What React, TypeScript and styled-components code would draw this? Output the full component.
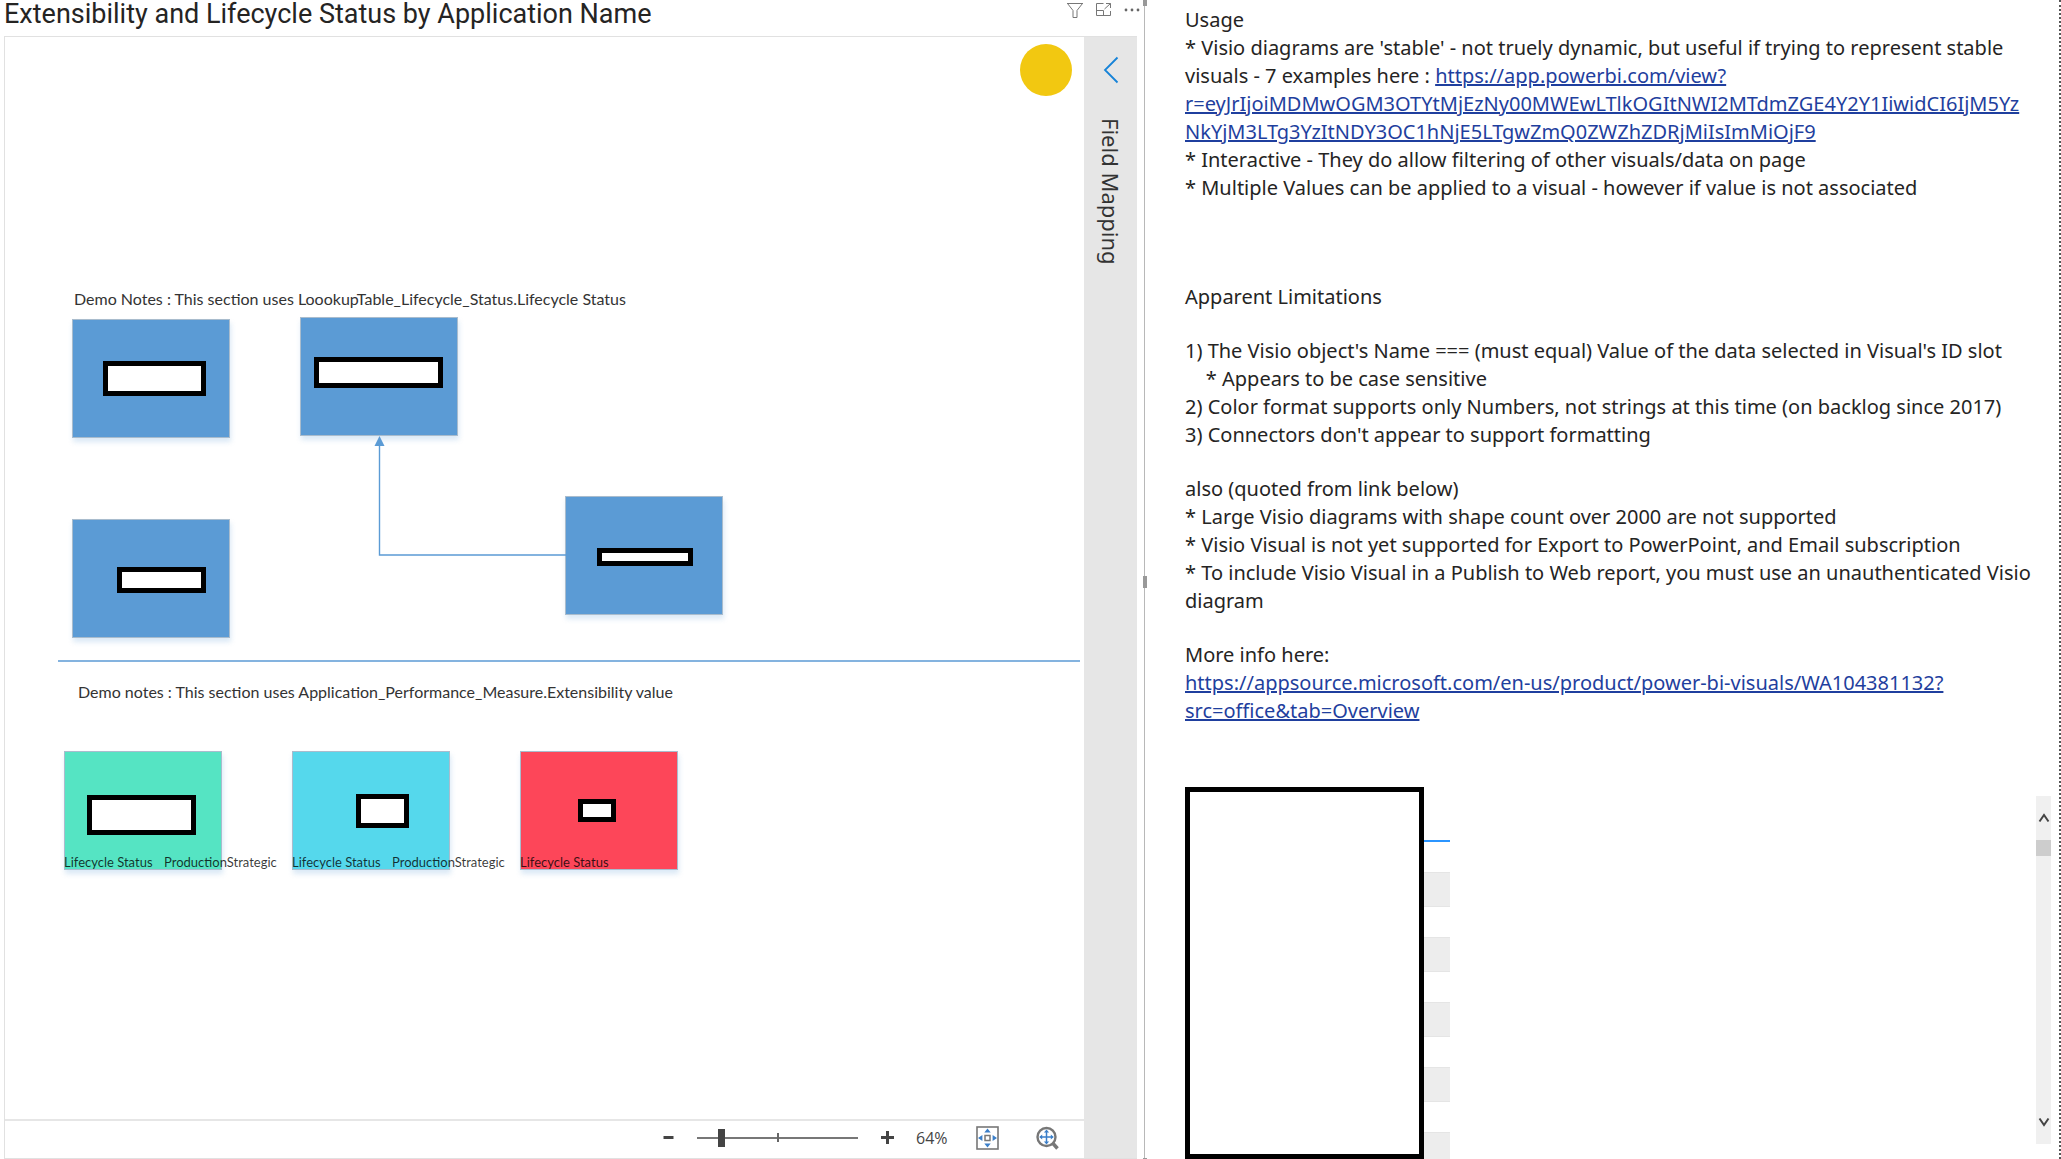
import React, { useState } from "react";
import styled, { createGlobalStyle } from "styled-components";

const GlobalStyle = createGlobalStyle`
  *, *::before, *::after { box-sizing: border-box; }
  html, body, #root { height: 100%; }
  body {
    margin: 0;
    background: #fff;
    color: #252423;
    font-family: "Open Sans", "Noto Sans", sans-serif;
    overflow: hidden;
  }
`;

const Page = styled.main`
  display: grid;
  grid-template-columns: 5fr 4fr;
  height: 100vh;
`;

/* ---------- left side: the diagram visual ---------- */

const VisualPane = styled.section`
  position: relative;
  display: flex;
  flex-direction: column;
  min-width: 0;
  padding: 0 7px 0 4px;
  border-right: 1px solid #b8b8b8;
`;

const ResizeHandle = styled.span<{ $top: string; $height: number }>`
  position: absolute;
  right: -3px;
  top: ${(p) => p.$top};
  width: 4px;
  height: ${(p) => p.$height}px;
  background: #999;
`;

const VisualHeader = styled.header`
  display: flex;
  justify-content: space-between;
  align-items: flex-start;
  height: 36px;
`;

const Title = styled.h1`
  margin: 0;
  font: 400 27px/28px Roboto, sans-serif;
  white-space: nowrap;
`;

const HeaderActions = styled.div`
  display: flex;
  gap: 12px;
  margin-right: -3px;
  padding-top: 2px;
`;

const IconButton = styled.button`
  display: grid;
  place-items: center;
  flex: none;
  padding: 0;
  border: 0;
  background: none;
  color: inherit;
  cursor: pointer;
`;

const Frame = styled.div`
  display: flex;
  flex: 1;
  min-height: 0;
  border: 1px solid #e1e1e1;
  border-right: 0;
`;

const DiagramColumn = styled.div`
  display: flex;
  flex: 1;
  flex-direction: column;
  min-width: 0;
`;

const Canvas = styled.div`
  position: relative;
  flex: 1;
  overflow: hidden;
  border-bottom: 2px solid #e6e6e6;
`;

const Marker = styled.span`
  position: absolute;
  top: 7px;
  right: 12px;
  width: 52px;
  height: 52px;
  border-radius: 50%;
  background: #f2c811;
`;

const Connector = styled.svg`
  position: absolute;
  left: 369px;
  top: 398px;
`;

const Divider = styled.hr`
  position: absolute;
  left: 53px;
  right: 4px;
  top: 623px;
  height: 2px;
  margin: 0;
  border: 0;
  background: #84b3df;
`;

type Box = { $x: number; $y: number; $w?: number; $h?: number };

const Note = styled.p<Box>`
  position: absolute;
  left: ${(p) => p.$x}px;
  top: ${(p) => p.$y}px;
  margin: 0;
  font: 400 16px/20px Lato, sans-serif;
  color: #333;
  white-space: nowrap;
`;

const Shape = styled.div<Box & { $fill: string }>`
  position: absolute;
  left: ${(p) => p.$x}px;
  top: ${(p) => p.$y}px;
  width: 158px;
  height: 119px;
  border: 1px solid #a9bccd;
  background: ${(p) => p.$fill};
  box-shadow: 1px 4px 5px rgba(91, 155, 213, 0.22);
`;

const Mask = styled.div<Box>`
  position: absolute;
  left: ${(p) => p.$x}px;
  top: ${(p) => p.$y}px;
  width: ${(p) => p.$w}px;
  height: ${(p) => p.$h}px;
  border: 5px solid #000;
  background: #fff;
`;

const ShapeData = styled.div<Box>`
  position: absolute;
  left: ${(p) => p.$x}px;
  top: ${(p) => p.$y}px;
  display: flex;
  font: 400 13px/16px Lato, sans-serif;
  color: rgba(0, 0, 0, 0.78);
  white-space: nowrap;
`;

const DataLabel = styled.span`
  width: 100px;
`;

const Toolbar = styled.div`
  display: flex;
  align-items: center;
  justify-content: flex-end;
  gap: 28px;
  height: 37px;
  padding: 0 25px 4px 0;
  color: #444;
`;

const ZoomControl = styled.div`
  display: flex;
  align-items: center;
  gap: 17px;
`;

const ZoomStep = styled(IconButton)`
  width: 24px;
  height: 24px;
`;

const ZoomRange = styled.input`
  appearance: none;
  width: 161px;
  height: 20px;
  margin: 0;
  background:
    linear-gradient(#666, #666) 50% 50% / 2px 9px no-repeat,
    linear-gradient(#777, #777) 0 50% / 100% 2px no-repeat;

  &::-webkit-slider-thumb {
    appearance: none;
    width: 7px;
    height: 18px;
    border-radius: 0;
    background: #444;
  }
`;

const ZoomValue = styled.output`
  width: 32px;
  font-size: 16px;
  line-height: 24px;
`;

const ViewActions = styled.div`
  display: flex;
  gap: 37px;
`;

const FieldPanel = styled.aside`
  display: flex;
  flex-direction: column;
  align-items: center;
  gap: 34px;
  width: 53px;
  padding-top: 19px;
  background: #e6e6e6;
`;

const FieldLabel = styled.h2`
  margin: 0;
  font: 400 22px/30px "Noto Sans", sans-serif;
  color: #333;
  writing-mode: vertical-rl;
`;

/* ---------- right side: notes and table ---------- */

const InfoPane = styled.section`
  display: flex;
  flex-direction: column;
  min-width: 0;
  min-height: 0;
  padding: 6px 7px 0 40px;
  border-right: 2px dotted #555;
`;

const Notes = styled.article`
  display: flex;
  flex-direction: column;
  gap: 26px;
  font-family: "Noto Sans", sans-serif;
  font-size: 20px;
  line-height: 28px;
`;

const NoteBlock = styled.p<{ $wide?: boolean }>`
  margin: 0 0 ${(p) => (p.$wide ? 55 : 0)}px;
  white-space: pre-wrap;
  overflow-wrap: anywhere;
`;

const Link = styled.a`
  color: #1f3f9e;
  text-decoration: underline;
`;

const TableArea = styled.div`
  position: relative;
  display: flex;
  justify-content: space-between;
  flex: 1;
  min-height: 0;
  margin-top: 62px;
  overflow: hidden;
`;

const DataTable = styled.table`
  width: 265px;
  height: max-content;
  margin-top: 7px;
  border-collapse: collapse;
`;

const HeadCell = styled.th`
  height: 47px;
  padding: 0;
  border-bottom: 2px solid #2b95ff;
`;

const Row = styled.tr`
  &:nth-child(even) td {
    background: #ededed;
    border-top: 1px solid #e5e5e5;
    border-bottom: 1px solid #e5e5e5;
  }
`;

const Cell = styled.td<{ $tall: boolean }>`
  height: ${(p) => (p.$tall ? 34 : 31)}px;
  padding: 0;
`;

const TableCover = styled.div`
  position: absolute;
  left: 0;
  top: 0;
  bottom: 0;
  width: 239px;
  border: 5px solid #000;
  background: #fff;
`;

const ScrollTrack = styled.div`
  display: flex;
  flex-direction: column;
  width: 15px;
  margin: 9px 1px 15px 0;
  background: #f0f0f0;
`;

const ScrollThumb = styled.div`
  height: 16px;
  margin-bottom: auto;
  background: #cdcdcd;
`;

const ScrollStep = styled(IconButton)`
  width: 15px;
  height: 44px;
`;

const BLUE = "#5b9bd5";

const shapes = [
  { x: 67, y: 282, fill: BLUE, mask: [98, 324, 103, 35] },
  { x: 295, y: 280, fill: BLUE, mask: [309, 320, 129, 31] },
  { x: 67, y: 482, fill: BLUE, mask: [112, 530, 89, 26] },
  { x: 560, y: 459, fill: BLUE, mask: [592, 511, 96, 18] },
  { x: 59, y: 714, fill: "#55e4c3", mask: [82, 758, 109, 40], data: "ProductionStrategic" },
  { x: 287, y: 714, fill: "#55d8ec", mask: [351, 757, 53, 34], data: "ProductionStrategic" },
  { x: 515, y: 714, fill: "#fd4659", mask: [573, 762, 38, 23], data: "" },
];

const rows = Array.from({ length: 10 }, (_, i) => i);

const FilterIcon = () => (
  <svg width="18" height="16" viewBox="0 0 18 16" fill="none" stroke="#777" strokeWidth="1">
    <path d="M1 1.5H17M1.5 1.5L7 8.5V15.5H11V8.5L16.5 1.5" />
  </svg>
);

const FocusIcon = () => (
  <svg width="16" height="14" viewBox="0 0 16 14" fill="none" stroke="#777" strokeWidth="1">
    <path d="M7.5 .5H.5V12.5H14.5V8M.5 7.5H7.5V12.5M10 .5H14.5V5M14.5 .5L8.5 6" />
  </svg>
);

const MoreIcon = () => (
  <svg width="16" height="4" viewBox="0 0 16 4" fill="#666">
    <circle cx="2" cy="2" r="1.4" />
    <circle cx="8" cy="2" r="1.4" />
    <circle cx="14" cy="2" r="1.4" />
  </svg>
);

const FitIcon = () => (
  <svg width="23" height="24" viewBox="0 0 23 24">
    <rect x="1" y="1" width="21" height="22" fill="none" stroke="#777" strokeWidth="1.6" />
    <rect x="9" y="9.5" width="5" height="5" fill="none" stroke="#777" strokeWidth="1.5" />
    <path
      d="M11.5 2.5l3.2 4h-6.4zM11.5 21.5l3.2-4h-6.4zM2 12l4.4-3v6zM21 12l-4.4-3v6z"
      fill="#3b7fc9"
    />
  </svg>
);

const FitZoomIcon = () => (
  <svg width="23" height="24" viewBox="0 0 23 24" fill="none">
    <circle cx="10.5" cy="11" r="9" stroke="#777" strokeWidth="2.4" />
    <path d="M17 17.5L21.5 22.5" stroke="#777" strokeWidth="3.5" />
    <path d="M10.5 5V17M4.5 11H16.5" stroke="#3b7fc9" strokeWidth="1.5" />
    <path
      d="M10.5 3.5l2.6 3H7.9zM10.5 18.5l2.6-3H7.9zM3.2 11l3-2.6v5.2zM17.8 11l-3-2.6v5.2z"
      fill="#3b7fc9"
    />
  </svg>
);

const Chevron = ({ up }: { up?: boolean }) => (
  <svg width="12" height="10" viewBox="0 0 12 10" fill="none" stroke="#444" strokeWidth="2">
    <path d={up ? "M1.5 8.5L6 2L10.5 8.5" : "M1.5 1.5L6 8L10.5 1.5"} />
  </svg>
);

export default function App() {
  const [zoom, setZoom] = useState(64);

  return (
    <Page>
      <GlobalStyle />
      <VisualPane>
        <VisualHeader>
          <Title>Extensibility and Lifecycle Status by Application Name</Title>
          <HeaderActions>
            <IconButton aria-label="Filters">
              <FilterIcon />
            </IconButton>
            <IconButton aria-label="Focus mode">
              <FocusIcon />
            </IconButton>
            <IconButton aria-label="More options">
              <MoreIcon />
            </IconButton>
          </HeaderActions>
        </VisualHeader>
        <Frame>
          <DiagramColumn>
            <Canvas>
              <Marker />
              <Note $x={69} $y={252}>
                Demo Notes : This section uses LoookupTable_Lifecycle_Status.Lifecycle Status
              </Note>
              <Note $x={73} $y={645}>
                Demo notes : This section uses Application_Performance_Measure.Extensibility value
              </Note>
              <Divider />
              {shapes.map((s) => (
                <React.Fragment key={`${s.x}-${s.y}`}>
                  <Shape $x={s.x} $y={s.y} $fill={s.fill} />
                  <Mask $x={s.mask[0]} $y={s.mask[1]} $w={s.mask[2]} $h={s.mask[3]} />
                  {s.data !== undefined && (
                    <ShapeData $x={s.x} $y={s.y + 103}>
                      <DataLabel>Lifecycle Status</DataLabel>
                      {s.data && <span>{s.data}</span>}
                    </ShapeData>
                  )}
                </React.Fragment>
              ))}
              <Connector width="192" height="122" viewBox="0 0 192 122" fill="none">
                <path d="M5.5 10V120H192" stroke={BLUE} strokeWidth="1.4" />
                <path d="M5.5 1L10.5 11H.5z" fill={BLUE} />
              </Connector>
            </Canvas>
            <Toolbar>
              <ZoomControl>
                <ZoomStep aria-label="Zoom out" onClick={() => setZoom((z) => Math.max(10, z - 10))}>
                  <svg width="15" height="15" viewBox="0 0 15 15">
                    <path d="M2.5 7.5H12.5" stroke="#444" strokeWidth="3" />
                  </svg>
                </ZoomStep>
                <ZoomRange
                  type="range"
                  aria-label="Zoom"
                  min={10}
                  max={400}
                  value={zoom}
                  onChange={(e) => setZoom(Number(e.target.value))}
                />
                <ZoomStep aria-label="Zoom in" onClick={() => setZoom((z) => Math.min(400, z + 10))}>
                  <svg width="15" height="15" viewBox="0 0 15 15">
                    <path d="M1 7.5H14M7.5 1V14" stroke="#444" strokeWidth="3" />
                  </svg>
                </ZoomStep>
                <ZoomValue>{zoom}%</ZoomValue>
              </ZoomControl>
              <ViewActions>
                <IconButton aria-label="Fit to window">
                  <FitIcon />
                </IconButton>
                <IconButton aria-label="Zoom to selection">
                  <FitZoomIcon />
                </IconButton>
              </ViewActions>
            </Toolbar>
          </DiagramColumn>
          <FieldPanel>
            <IconButton aria-label="Expand field mapping">
              <svg width="16" height="28" viewBox="0 0 16 28" fill="none">
                <path d="M14.5 1.5L2 14L14.5 26.5" stroke="#1683d8" strokeWidth="1.8" />
              </svg>
            </IconButton>
            <FieldLabel>Field Mapping</FieldLabel>
          </FieldPanel>
        </Frame>
        <ResizeHandle $top="0" $height={6} />
        <ResizeHandle $top="calc(50% - 4px)" $height={12} />
        <ResizeHandle $top="calc(100% - 1px)" $height={1} />
      </VisualPane>

      <InfoPane>
        <Notes>
          <NoteBlock $wide>
            {"Usage\n* Visio diagrams are 'stable' - not truely dynamic, but useful if trying to represent stable visuals - 7 examples here : "}
            <Link href="#examples">
              https://app.powerbi.com/view?<wbr />
              r=eyJrIjoiMDMwOGM3OTYtMjEzNy00MWEwLTlkOGItNWI2MTdmZGE4Y2Y1IiwidCI6IjM5Yz<wbr />
              NkYjM3LTg3YzItNDY3OC1hNjE5LTgwZmQ0ZWZhZDRjMiIsImMiOjF9
            </Link>
            {"\n* Interactive - They do allow filtering of other visuals/data on page\n* Multiple Values can be applied to a visual - however if value is not associated"}
          </NoteBlock>
          <NoteBlock>Apparent Limitations</NoteBlock>
          <NoteBlock>
            {"1) The Visio object's Name === (must equal) Value of the data selected in Visual's ID slot\n    * Appears to be case sensitive\n2) Color format supports only Numbers, not strings at this time (on backlog since 2017)\n3) Connectors don't appear to support formatting"}
          </NoteBlock>
          <NoteBlock>
            {"also (quoted from link below)\n* Large Visio diagrams with shape count over 2000 are not supported\n* Visio Visual is not yet supported for Export to PowerPoint, and Email subscription\n* To include Visio Visual in a Publish to Web report, you must use an unauthenticated Visio diagram"}
          </NoteBlock>
          <NoteBlock>
            {"More info here:\n"}
            <Link href="#overview">
              https://appsource.microsoft.com/en-us/product/power-bi-visuals/WA104381132?<wbr />
              src=office&amp;tab=Overview
            </Link>
          </NoteBlock>
        </Notes>
        <TableArea>
          <DataTable>
            <thead>
              <tr>
                <HeadCell />
              </tr>
            </thead>
            <tbody>
              {rows.map((i) => (
                <Row key={i}>
                  <Cell $tall={i % 2 === 1} />
                </Row>
              ))}
            </tbody>
          </DataTable>
          <TableCover />
          <ScrollTrack>
            <ScrollStep aria-label="Scroll up">
              <Chevron up />
            </ScrollStep>
            <ScrollThumb />
            <ScrollStep aria-label="Scroll down">
              <Chevron />
            </ScrollStep>
          </ScrollTrack>
        </TableArea>
      </InfoPane>
    </Page>
  );
}
